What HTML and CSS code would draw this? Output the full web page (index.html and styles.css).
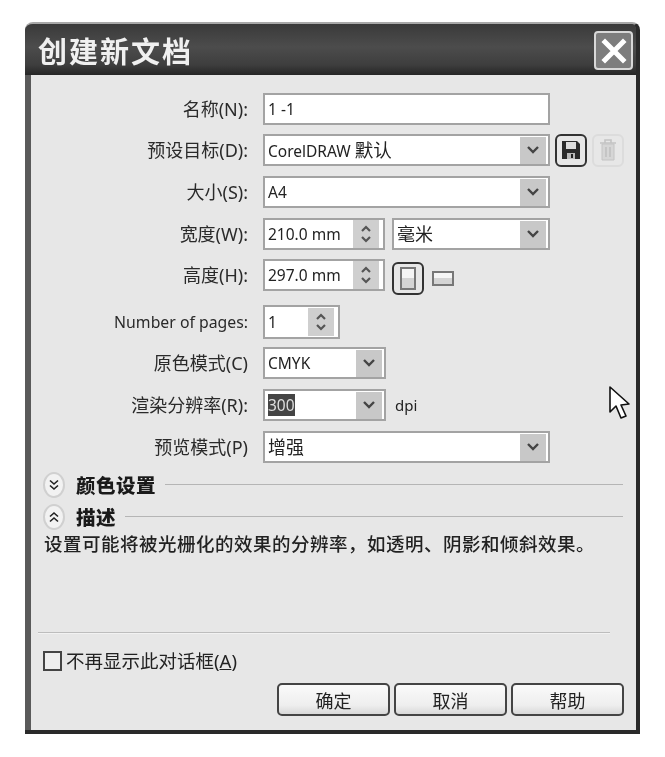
FILE: index.html
```html
<!DOCTYPE html>
<html lang="zh">
<head>
<meta charset="utf-8">
<title>创建新文档</title>
<link rel="stylesheet" href="styles.css">
</head>
<body>
<div class="window">
  <header class="titlebar">
    <h1 class="title">创建新文档</h1>
    <button class="close" type="button" aria-label="关闭">
      <svg width="26" height="26" viewBox="0 0 26 26"><path d="M4 4L22 22M22 4L4 22" stroke="#fff" stroke-width="5" stroke-linecap="square"/></svg>
    </button>
  </header>
  <main class="client">
    <div class="form">
      <div class="row">
        <label class="label">名称(N):</label>
        <div class="field w-full"><span class="value">1 -1</span></div>
      </div>
      <div class="row row-tight">
        <label class="label">预设目标(D):</label>
        <div class="field w-full"><span class="value">CorelDRAW <span class="cjk-inline">默认</span></span><span class="arrow"><svg width="14" height="10" viewBox="0 0 14 10"><path d="M2 2L7 7L12 2" fill="none" stroke="#444" stroke-width="2.4"/></svg></span></div>
        <button class="iconbtn active" type="button" aria-label="保存">
          <svg width="20" height="20" viewBox="0 0 20 20"><path d="M1 1H16L19 4V19H1Z" fill="#2b2b2b"/><rect x="5" y="2" width="10" height="7" fill="#ddd"/><rect x="6" y="13" width="8" height="6" fill="#bbb"/><rect x="10" y="14" width="2" height="4" fill="#222"/></svg>
        </button>
        <button class="iconbtn disabled" type="button" aria-label="删除">
          <svg width="20" height="24" viewBox="0 0 20 24"><path d="M2 5H18M7 5V2H13V5" fill="none" stroke="#c4c4c4" stroke-width="1.6"/><path d="M4 6H16V22H4Z" fill="#d6d6d6" stroke="#c4c4c4"/><path d="M8 9V19M12 9V19" stroke="#bdbdbd" stroke-width="1.4"/></svg>
        </button>
      </div>
      <div class="row">
        <label class="label">大小(S):</label>
        <div class="field w-full"><span class="value">A4</span><span class="arrow"><svg width="14" height="10" viewBox="0 0 14 10"><path d="M2 2L7 7L12 2" fill="none" stroke="#444" stroke-width="2.4"/></svg></span></div>
      </div>
      <div class="row">
        <label class="label">宽度(W):</label>
        <div class="field w-num"><span class="value">210.0 mm</span><span class="spin"><svg width="14" height="22" viewBox="0 0 14 22"><path d="M3 8L7 4L11 8M3 14L7 18L11 14" fill="none" stroke="#555" stroke-width="2.2"/></svg></span></div>
        <div class="field w-unit"><span class="value value-cjk">毫米</span><span class="arrow"><svg width="14" height="10" viewBox="0 0 14 10"><path d="M2 2L7 7L12 2" fill="none" stroke="#444" stroke-width="2.4"/></svg></span></div>
      </div>
      <div class="row row-tight">
        <label class="label">高度(H):</label>
        <div class="field w-num"><span class="value">297.0 mm</span><span class="spin"><svg width="14" height="22" viewBox="0 0 14 22"><path d="M3 8L7 4L11 8M3 14L7 18L11 14" fill="none" stroke="#555" stroke-width="2.2"/></svg></span></div>
        <div class="orient">
          <button class="iconbtn active portrait" type="button" aria-label="纵向"><span class="page-tall"></span></button>
          <span class="page-wide"></span>
        </div>
      </div>
      <div class="row row-pages">
        <label class="label label-latin">Number of pages:</label>
        <div class="field w-pages"><span class="value">1</span><span class="spin"><svg width="14" height="22" viewBox="0 0 14 22"><path d="M3 8L7 4L11 8M3 14L7 18L11 14" fill="none" stroke="#555" stroke-width="2.2"/></svg></span></div>
      </div>
      <div class="row">
        <label class="label">原色模式(C)</label>
        <div class="field w-mode"><span class="value">CMYK</span><span class="arrow"><svg width="14" height="10" viewBox="0 0 14 10"><path d="M2 2L7 7L12 2" fill="none" stroke="#444" stroke-width="2.4"/></svg></span></div>
      </div>
      <div class="row">
        <label class="label">渲染分辨率(R):</label>
        <div class="field w-mode"><span class="value"><span class="selected">300</span></span><span class="arrow"><svg width="14" height="10" viewBox="0 0 14 10"><path d="M2 2L7 7L12 2" fill="none" stroke="#444" stroke-width="2.4"/></svg></span></div>
        <span class="unit">dpi</span>
      </div>
      <div class="row">
        <label class="label">预览模式(P)</label>
        <div class="field w-full"><span class="value value-cjk">增强</span><span class="arrow"><svg width="14" height="10" viewBox="0 0 14 10"><path d="M2 2L7 7L12 2" fill="none" stroke="#444" stroke-width="2.4"/></svg></span></div>
      </div>
    </div>

    <div class="section section-color">
      <span class="toggle"><svg width="12" height="12" viewBox="0 0 12 12"><path d="M2 1.5L6 5L10 1.5M2 6.5L6 10L10 6.5" fill="none" stroke="#222" stroke-width="1.6"/></svg></span>
      <span class="section-title">颜色设置</span>
      <span class="section-line"></span>
    </div>
    <div class="section section-desc">
      <span class="toggle"><svg width="12" height="12" viewBox="0 0 12 12"><path d="M2 5.5L6 2L10 5.5M2 10.5L6 7L10 10.5" fill="none" stroke="#222" stroke-width="1.6"/></svg></span>
      <span class="section-title">描述</span>
      <span class="section-line"></span>
    </div>
    <p class="desc">设置可能将被光栅化的效果的分辨率，如透明、阴影和倾斜效果。</p>

    <div class="separator"></div>

    <label class="check"><span class="box"></span><span>不再显示此对话框(<u>A</u>)</span></label>

    <div class="buttons">
      <button class="btn" type="button">确定</button>
      <button class="btn" type="button">取消</button>
      <button class="btn" type="button">帮助</button>
    </div>
  </main>
</div>
<svg class="cursor" width="22" height="36" viewBox="0 0 22 36"><path d="M2 1V26L8 20L13 32L18 30L13 19L21 18Z" fill="#fff" stroke="#111" stroke-width="1.6" stroke-linejoin="round"/></svg>
</body>
</html>
```
FILE: styles.css
```css
* { box-sizing: border-box; }
html, body { margin: 0; padding: 0; }
body {
  width: 665px;
  height: 757px;
  background: #fff;
  position: relative;
  overflow: hidden;
  font-family: "Noto Sans", "Noto Sans CJK SC", sans-serif;
  color: #222;
}
.window {
  margin: 22px 0 0 25px;
  width: 615px;
  height: 712px;
  display: flex;
  flex-direction: column;
  background: #5a5a5a;
  border-radius: 8px 8px 0 0;
  border-top: 2px solid #a8a8a8;
  border-right: 4px solid #2a2a2a;
  border-bottom: 4px solid #2a2a2a;
  overflow: hidden;
  filter: blur(0.6px);
}
.titlebar {
  height: 51px;
  flex: none;
  display: flex;
  align-items: center;
  justify-content: space-between;
  padding: 0 3px 0 13px;
  background: linear-gradient(180deg, #3a3a3a 0%, #4c4c4c 45%, #3e3e3e 80%, #262626 100%);
}
.title {
  margin: 0;
  font-family: "Noto Sans CJK SC", sans-serif;
  font-size: 29px;
  font-weight: 700;
  letter-spacing: 2px;
  line-height: 40px;
  color: #f0f0f0;
}
.close {
  width: 39px;
  height: 39px;
  padding: 0;
  margin-top: 2px;
  display: flex;
  align-items: center;
  justify-content: center;
  background: #7d7d7d;
  border: 2px solid #d8d8d8;
  border-radius: 4px;
}
.client {
  flex: 1;
  display: flex;
  flex-direction: column;
  margin: 0 0 0 6px;
  background: #e7e7e7;
}
.form {
  display: flex;
  flex-direction: column;
  gap: 10px;
  padding-top: 18px;
}
.row {
  display: flex;
  align-items: center;
  height: 32px;
}
.row-tight { margin-top: -1px; }
.row-pages { margin-top: 4px; height: 34px; margin-bottom: -2px; }
.label {
  width: 217px;
  margin-right: 15px;
  flex: none;
  text-align: right;
  font-size: 18px;
  line-height: 22px;
  color: #2a2a2a;
}
.label-latin { font-size: 15.8px; }
.field {
  display: flex;
  align-items: center;
  justify-content: space-between;
  height: 100%;
  padding: 0 2px 0 3px;
  background: #fff;
  border: 2px solid #a3a3a3;
  flex: none;
}
.w-full { width: 287px; }
.w-num { width: 122px; }
.w-unit { width: 158px; margin-left: 7px; }
.w-pages { width: 77px; }
.w-mode { width: 123px; }
.value {
  font-size: 15.5px;
  line-height: 20px;
  color: #222;
}
.value-cjk { font-size: 18px; }
.cjk-inline { font-size: 18.5px; }
.selected { background: #444; color: #ddd; }
.arrow {
  width: 26px;
  height: 27px;
  display: flex;
  align-items: center;
  justify-content: center;
  background: #c8c8c8;
}
.spin {
  width: 26px;
  height: 28px;
  margin-right: 2px;
  display: flex;
  align-items: center;
  justify-content: center;
  background: #cfcfcf;
}
.iconbtn {
  width: 32px;
  height: 33px;
  padding: 0;
  display: flex;
  align-items: center;
  justify-content: center;
  background: #e7e7e7;
  border-radius: 6px;
  flex: none;
}
.iconbtn.active { border: 2px solid #333; margin-left: 5px; }
.iconbtn.disabled { border: 2px solid #dcdcdc; margin-left: 5px; }
.orient {
  display: flex;
  align-items: center;
  gap: 8px;
  margin-left: 2px;
  position: relative;
  top: 3px;
}
.page-tall {
  width: 16px;
  height: 23px;
  border: 2px solid #777;
  background: linear-gradient(180deg, #f5f5f5 50%, #d4d4d4 50%);
}
.page-wide {
  width: 22px;
  height: 15px;
  border: 2px solid #777;
  background: linear-gradient(180deg, #f5f5f5 50%, #d4d4d4 50%);
}
.unit {
  margin-left: 9px;
  font-size: 15px;
}
.section {
  display: flex;
  align-items: center;
  height: 27px;
  padding: 0 13px 0 12px;
}
.section-color { margin-top: 8px; }
.section-desc { margin-top: 5px; }
.toggle {
  width: 22px;
  height: 26px;
  flex: none;
  display: flex;
  align-items: center;
  justify-content: center;
  background: #f2f2f2;
  border: 2px solid #d0d0d0;
  border-radius: 50%;
}
.section-title {
  margin-left: 11px;
  font-family: "Noto Sans CJK SC", sans-serif;
  font-size: 19.5px;
  font-weight: 900;
  letter-spacing: 0.5px;
  line-height: 26px;
  color: #1a1a1a;
}
.section-line {
  flex: 1;
  height: 1px;
  margin-left: 9px;
  background: #b5b5b5;
}
.desc {
  margin: 0 0 0 13px;
  font-family: "Noto Sans CJK SC", sans-serif;
  font-size: 18.5px;
  font-weight: 500;
  letter-spacing: 0.5px;
  line-height: 26px;
  color: #222;
}
.separator {
  height: 2px;
  margin: 76px 0 0 7px;
  width: 572px;
  background: #bdbdbd;
  border-bottom: 1px solid #f2f2f2;
}
.check {
  display: flex;
  align-items: center;
  gap: 4px;
  margin: 15px 0 0 12px;
  font-size: 18.5px;
  line-height: 24px;
  color: #222;
}
.box {
  width: 19px;
  height: 20px;
  border: 2px solid #444;
  background: #eee;
}
.buttons {
  display: flex;
  justify-content: flex-end;
  gap: 4px;
  margin-top: 10px;
  padding-right: 12px;
}
.btn {
  width: 113px;
  height: 33px;
  padding: 0;
  font-family: "Noto Sans CJK SC", sans-serif;
  font-size: 18px;
  line-height: 24px;
  color: #222;
  background: linear-gradient(180deg, #fafafa 0%, #eee 70%, #d8d8d8 100%);
  border: 2px solid #444;
  border-radius: 5px;
}
.cursor {
  position: absolute;
  left: 608px;
  top: 386px;
  filter: blur(0.4px);
}
```
